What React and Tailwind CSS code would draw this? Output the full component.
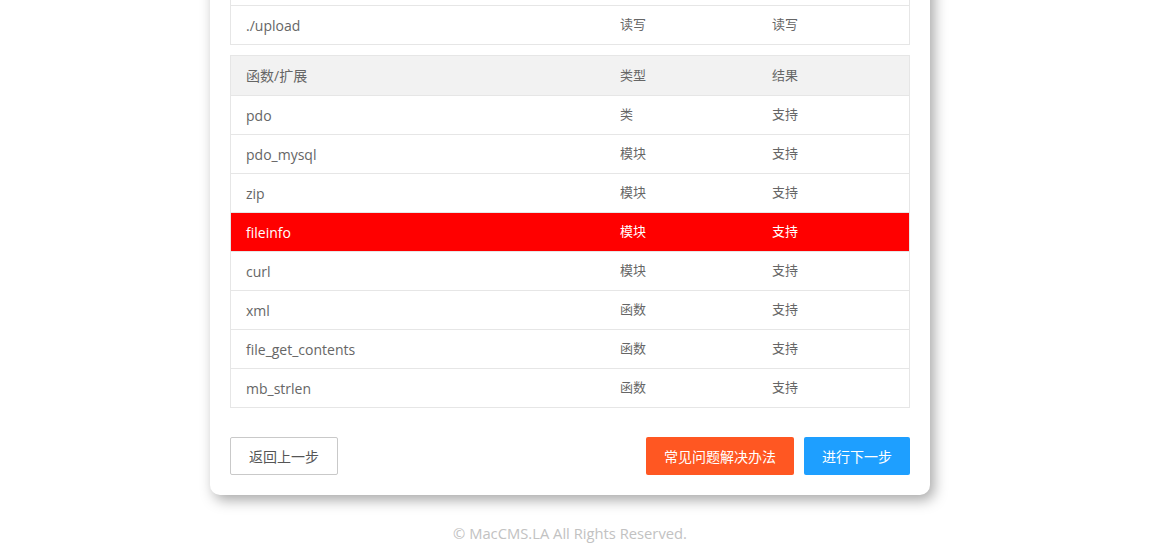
const dirRows = [
  { name: './runtime', a: '读写', b: '读写' },
  { name: './upload', a: '读写', b: '读写' },
];

const extRows = [
  { name: 'pdo', type: '类', result: '支持' },
  { name: 'pdo_mysql', type: '模块', result: '支持' },
  { name: 'zip', type: '模块', result: '支持' },
  { name: 'fileinfo', type: '模块', result: '支持', bad: true },
  { name: 'curl', type: '模块', result: '支持' },
  { name: 'xml', type: '函数', result: '支持' },
  { name: 'file_get_contents', type: '函数', result: '支持' },
  { name: 'mb_strlen', type: '函数', result: '支持' },
];

const font = { fontFamily: '"Open Sans", "Noto Sans CJK SC", sans-serif' };

const Row = ({ cells, className = '', first }) => (
  <div
    className={`flex h-[39px] items-center text-[14px] ${first ? 'h-[38px]' : 'border-t border-[#e6e6e6]'} ${className}`}
  >
    <div className="w-[375px] pl-[15px]">{cells[0]}</div>
    <div className="w-[151px] pl-[14px] text-[13px]">{cells[1]}</div>
    <div className="flex-1 pl-[15px] text-[13px]">{cells[2]}</div>
  </div>
);

export default function App() {
  return (
    <div className="min-h-screen overflow-hidden bg-white" style={font}>
      <div className="w-[1140px]">
        <div className="mx-auto -mt-[60px] w-[720px] rounded-[10px] bg-white px-5 pb-5 pt-[25px] shadow-[4px_5px_14px_rgba(0,0,0,0.35)]">
          {/* 目录权限 */}
          <div className="border border-[#e6e6e6] text-[#666]">
            {dirRows.map((r, i) => (
              <Row key={r.name} first={i === 0} cells={[r.name, r.a, r.b]} />
            ))}
          </div>

          {/* 函数/扩展 */}
          <div className="mt-[10px] border border-[#e6e6e6] text-[#666]">
            <Row first className="bg-[#f2f2f2]" cells={['函数/扩展', '类型', '结果']} />
            {extRows.map((r) => (
              <Row
                key={r.name}
                className={r.bad ? 'bg-[#ff0000] text-white' : ''}
                cells={[r.name, r.type, r.result]}
              />
            ))}
          </div>

          <div className="mt-[29px] flex items-center justify-between">
            <button className="h-[38px] rounded-[2px] border border-[#c9c9c9] bg-white px-[18px] text-[14px] text-[#555]">
              返回上一步
            </button>
            <div className="flex gap-[10px]">
              <button className="h-[38px] rounded-[2px] bg-[#ff5722] px-[18px] text-[14px] text-white">
                常见问题解决办法
              </button>
              <button className="h-[38px] rounded-[2px] bg-[#1e9fff] px-[18px] text-[14px] text-white">
                进行下一步
              </button>
            </div>
          </div>
        </div>

        <p className="mt-[27px] text-center text-[14.75px] text-[#c2c2c2]">
          © MacCMS.LA All Rights Reserved.
        </p>
      </div>
    </div>
  );
}
